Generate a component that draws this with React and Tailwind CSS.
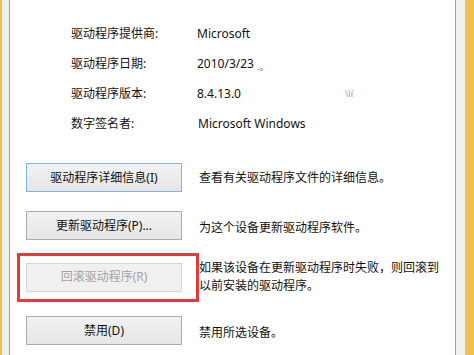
import React from "react";

const font = { fontFamily: '"Noto Sans", "Noto Sans CJK SC", sans-serif' };

function InfoRow({ label, value, extra }) {
  return (
    <div className="flex h-[30px] items-center text-[12px] text-[#111]">
      <div className="w-[126px] pl-[61px] box-content shrink-0 whitespace-nowrap">{label}</div>
      <div className="whitespace-nowrap flex items-center">
        {value}
        {extra}
      </div>
    </div>
  );
}

function Btn({ children, variant = "normal" }) {
  const cls =
    variant === "focus"
      ? "border-[#7eb4ea] bg-gradient-to-b from-[#f2f2f2] to-[#e6e6e6] text-[#111]"
      : variant === "disabled"
      ? "border-[#d4d4d4] bg-[#f0f0f0] text-[#a3a3a3]"
      : "border-[#acacac] bg-gradient-to-b from-[#f2f2f2] to-[#e6e6e6] text-[#111]";
  return (
    <div
      className={`w-[156px] h-[29px] shrink-0 border flex items-center justify-center text-[12px] whitespace-nowrap ${cls}`}
    >
      {children}
    </div>
  );
}

export default function App() {
  return (
    <div className="w-[474px] h-[355px] flex bg-white overflow-hidden" style={font}>
      <div className="w-[2px] h-full bg-[#f0c050]" />
      <div className="w-[7px] h-full bg-[#f0f0f0]" />
      <div className="w-px h-full bg-[#a0a0a0]" />
      <div className="flex-1 h-full bg-white flex flex-col">
        <div className="pt-[19px]">
          <InfoRow label="驱动程序提供商:" value="Microsoft" />
          <InfoRow
            label="驱动程序日期:"
            value="2010/3/23"
            extra={<span className="ml-[3px] text-[9px] text-[#555] mt-[6px]">.。</span>}
          />
          <InfoRow
            label="驱动程序版本:"
            value="8.4.13.0"
            extra={<span className="ml-[104px] text-[9px] text-[#999]">\ìí</span>}
          />
          <InfoRow label="数字签名者:" value={<span className="ml-[1px]">Microsoft Windows</span>} />
        </div>

        <div className="mt-[24px] pl-[16px] flex items-center">
          <Btn variant="focus">驱动程序详细信息(I)</Btn>
          <div className="ml-[17px] text-[12px] text-[#111] whitespace-nowrap">
            查看有关驱动程序文件的详细信息。
          </div>
        </div>

        <div className="mt-[19px] pl-[16px] flex items-center">
          <Btn>更新驱动程序(P)...</Btn>
          <div className="ml-[17px] mt-[4px] text-[12px] text-[#111] whitespace-nowrap">
            为这个设备更新驱动程序软件。
          </div>
        </div>

        <div className="mt-[19px] pl-[16px] flex items-center relative">
          <div className="relative">
            <Btn variant="disabled">回滚驱动程序(R)</Btn>
            <div className="absolute left-[-9px] top-[-10px] w-[182px] h-[49px] border-[3px] border-[#e8383a]" />
          </div>
          <div className="ml-[17px] text-[12px] leading-[18px] text-[#111] whitespace-nowrap">
            <div>如果该设备在更新驱动程序时失败，则回滚到</div>
            <div>以前安装的驱动程序。</div>
          </div>
        </div>

        <div className="mt-[21px] pl-[16px] flex items-center">
          <Btn>禁用(D)</Btn>
          <div className="ml-[17px] mt-[4px] text-[12px] text-[#111] whitespace-nowrap">
            禁用所选设备。
          </div>
        </div>
      </div>
      <div className="w-px h-full bg-[#a0a0a0]" />
      <div className="w-[9px] h-full bg-[#f0f0f0]" />
      <div className="w-[9px] h-full bg-[#f0c050]" />
    </div>
  );
}
